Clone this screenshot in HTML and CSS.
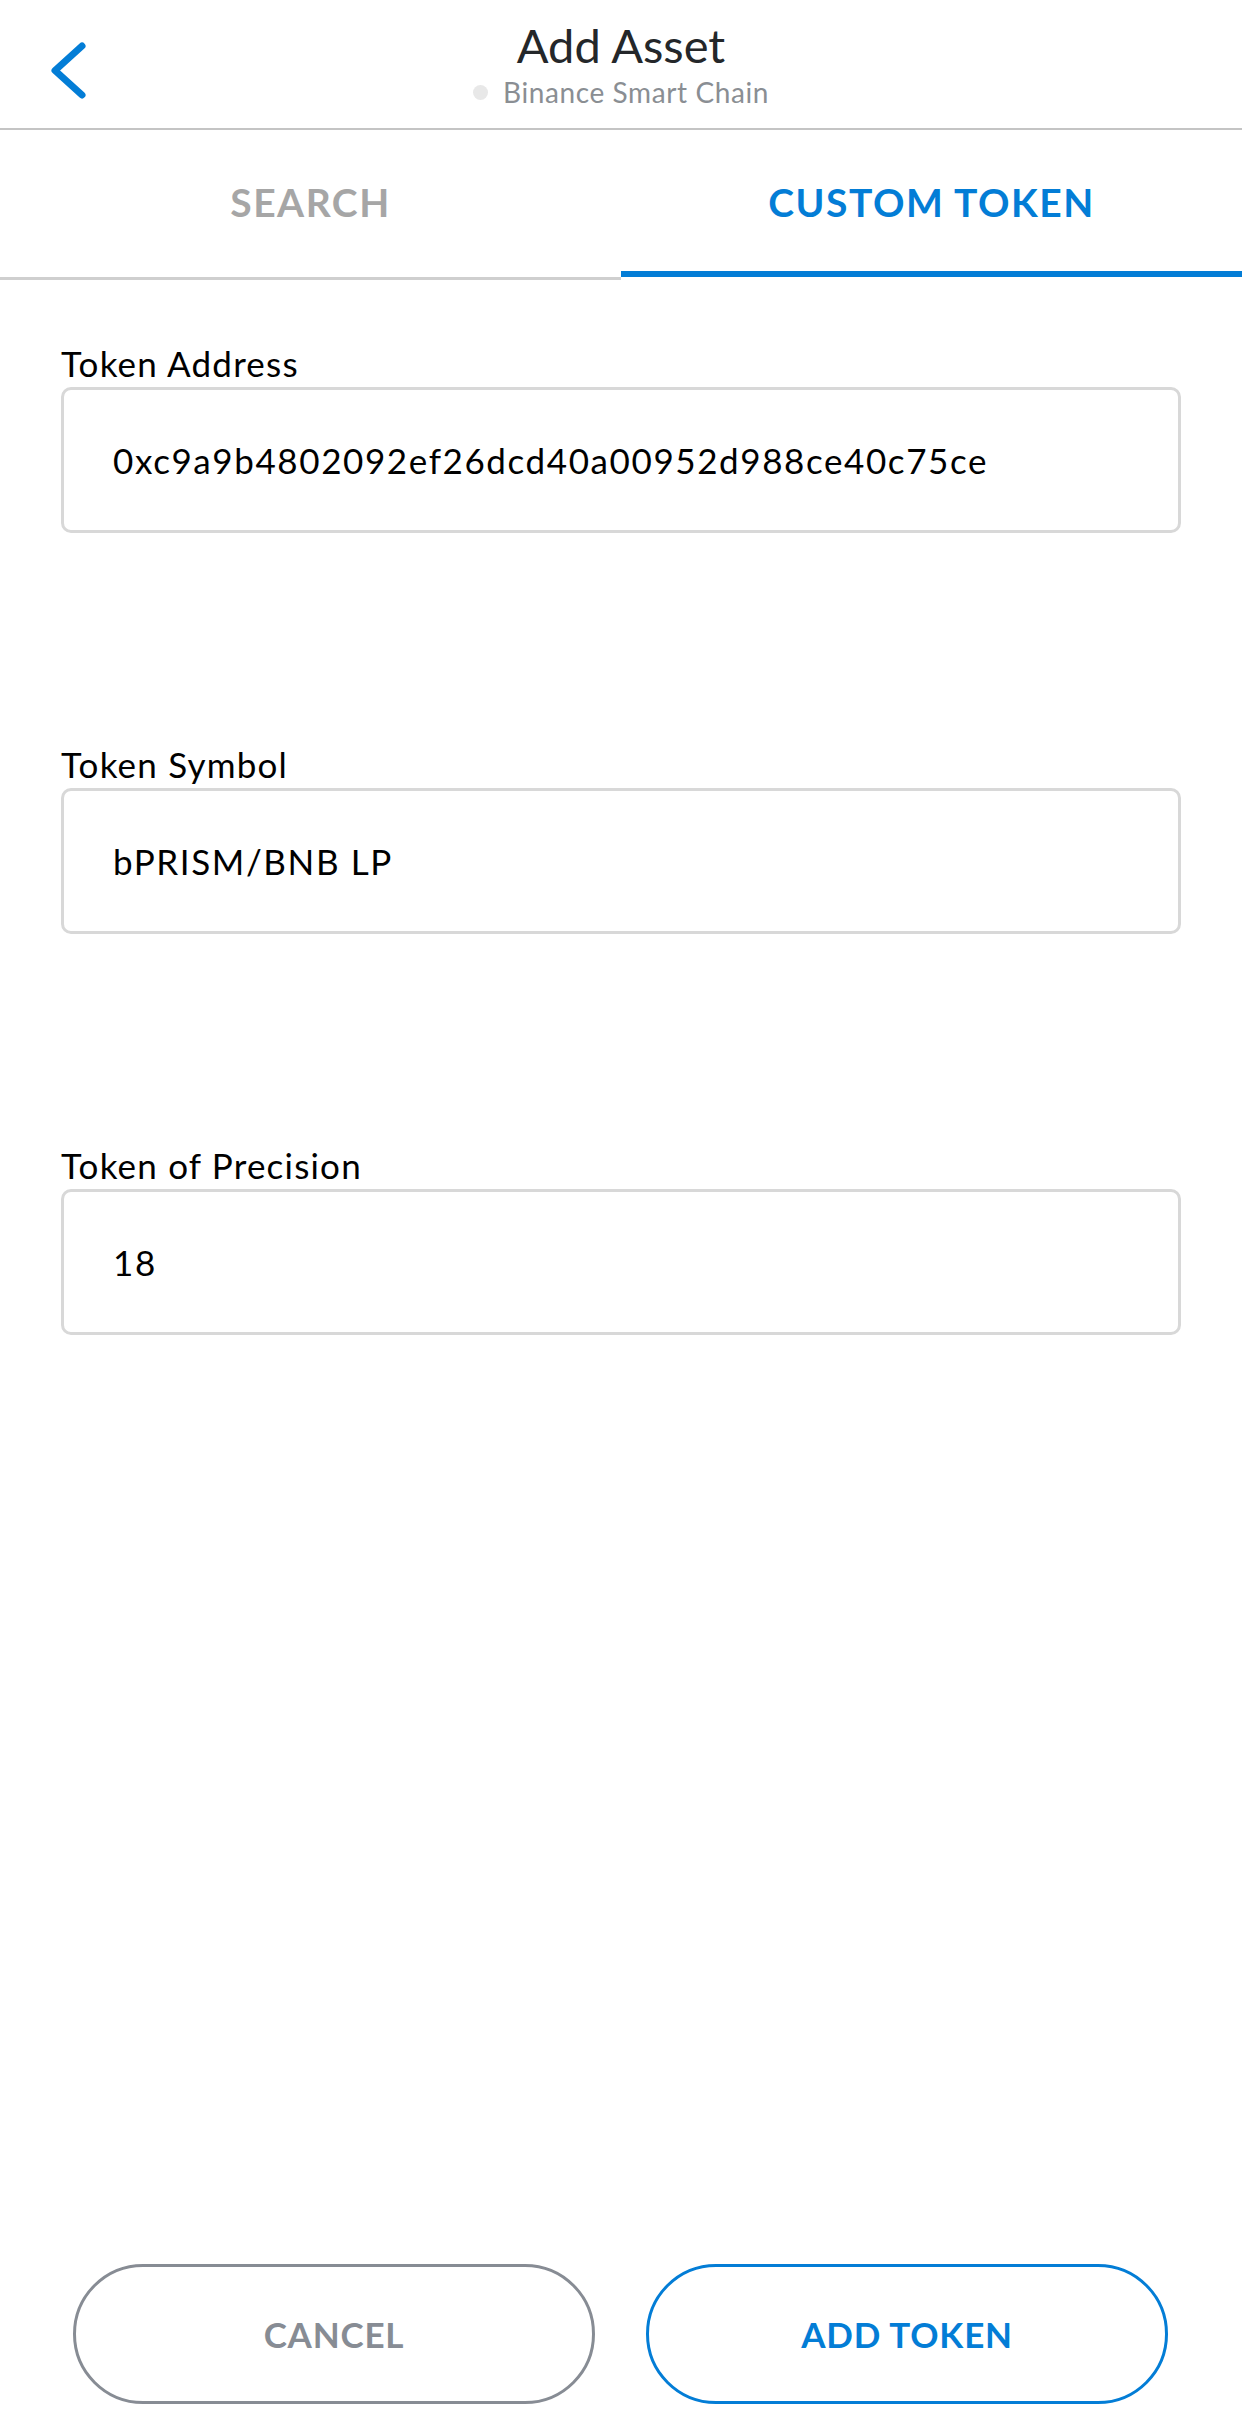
FILE: index.html
```html
<!DOCTYPE html>
<html lang="en">
<head>
  <meta charset="UTF-8">
  <title>Add Asset</title>
  <meta name="viewport" content="width=device-width, initial-scale=1">
  <link rel="stylesheet" href="styles.css">
</head>
<body>
  <div class="screen">
    <header class="header">
      <a class="back" href="#" aria-label="Back">
        <svg width="120" height="128" viewBox="0 0 120 128">
          <polyline points="82,46 55,70.5 82,95" fill="none" stroke="#037dd6" stroke-width="7" stroke-linecap="round" stroke-linejoin="round"/>
        </svg>
      </a>
      <div class="title-block">
        <div class="title">Add Asset</div>
        <div class="network"><span class="dot"></span>Binance Smart Chain</div>
      </div>
      <div></div>
    </header>

    <nav class="tabs">
      <div class="tab">SEARCH</div>
      <div class="tab active">CUSTOM TOKEN</div>
    </nav>

    <form class="token-form" id="tokenForm">
      <div class="field">
        <label for="address">Token Address</label>
        <input type="text" id="address" value="0xc9a9b4802092ef26dcd40a00952d988ce40c75ce">
      </div>
      <div class="field">
        <label for="symbol">Token Symbol</label>
        <input type="text" id="symbol" value="bPRISM/BNB LP">
      </div>
      <div class="field">
        <label for="decimals">Token of Precision</label>
        <input type="text" id="decimals" value="18">
      </div>
    </form>

    <footer class="actions">
      <button type="button" class="btn cancel">CANCEL</button>
      <button type="submit" form="tokenForm" class="btn confirm">ADD TOKEN</button>
    </footer>
  </div>
</body>
</html>
```

FILE: styles.css
```css
* {
  box-sizing: border-box;
}
body {
  margin: 0;
  font-family: Lato, "Noto Sans", sans-serif;
  color: #000;
  background: #fff;
}
.screen {
  display: flex;
  flex-direction: column;
  min-height: 100vh;
}

/* header */
.header {
  display: grid;
  grid-template-columns: 120px 1fr 120px;
  height: 130px;
  border-bottom: 2px solid #c4c4c4;
}
.back {
  display: block;
  height: 128px;
}
.back svg {
  display: block;
}
.title-block {
  display: flex;
  flex-direction: column;
  align-items: center;
  padding-top: 17px;
}
.title {
  font-size: 47px;
  line-height: 56px;
  color: #24272a;
}
.network {
  display: flex;
  align-items: center;
  margin-top: 2px;
  font-size: 28px;
  line-height: 34px;
  letter-spacing: 0.6px;
  color: #8a8e93;
}
.dot {
  width: 15px;
  height: 15px;
  border-radius: 50%;
  background: #e8e8e8;
  margin-right: 15px;
}

/* tabs */
.tabs {
  display: flex;
  align-items: flex-start;
}
.tab {
  flex: 1;
  height: 150px;
  padding-top: 49px;
  text-align: center;
  font-size: 39px;
  line-height: 46px;
  font-weight: 700;
  letter-spacing: 1.5px;
  color: #a6a6a6;
  border-bottom: 3px solid #cfcfcf;
}
.tab.active {
  height: 147px;
  color: #037dd6;
  border-bottom: 6px solid #037dd6;
}

/* form */
.token-form {
  flex: 1;
  padding: 63px 61px 0;
}
.field {
  margin-bottom: 211px;
}
.field label {
  display: block;
  font-size: 35px;
  line-height: 40px;
  letter-spacing: 1.2px;
  margin-bottom: 4px;
}
.field input {
  display: block;
  width: 100%;
  height: 146px;
  padding: 0 0 0 49px;
  border: 3px solid #d8d8d8;
  border-radius: 10px;
  font-family: inherit;
  font-size: 35px;
  letter-spacing: 1.6px;
  color: #000;
  background: #fff;
  outline: none;
}

/* bottom buttons */
.actions {
  display: flex;
  gap: 51px;
  padding: 0 74px 20px 73px;
}
.btn {
  flex: 1;
  height: 140px;
  border-radius: 70px;
  background: #fff;
  font-family: inherit;
  font-size: 35px;
  font-weight: 700;
  letter-spacing: 0.8px;
}
.btn.cancel {
  border: 3px solid #878c94;
  color: #878c94;
}
.btn.confirm {
  border: 3px solid #037dd6;
  color: #037dd6;
}
```
